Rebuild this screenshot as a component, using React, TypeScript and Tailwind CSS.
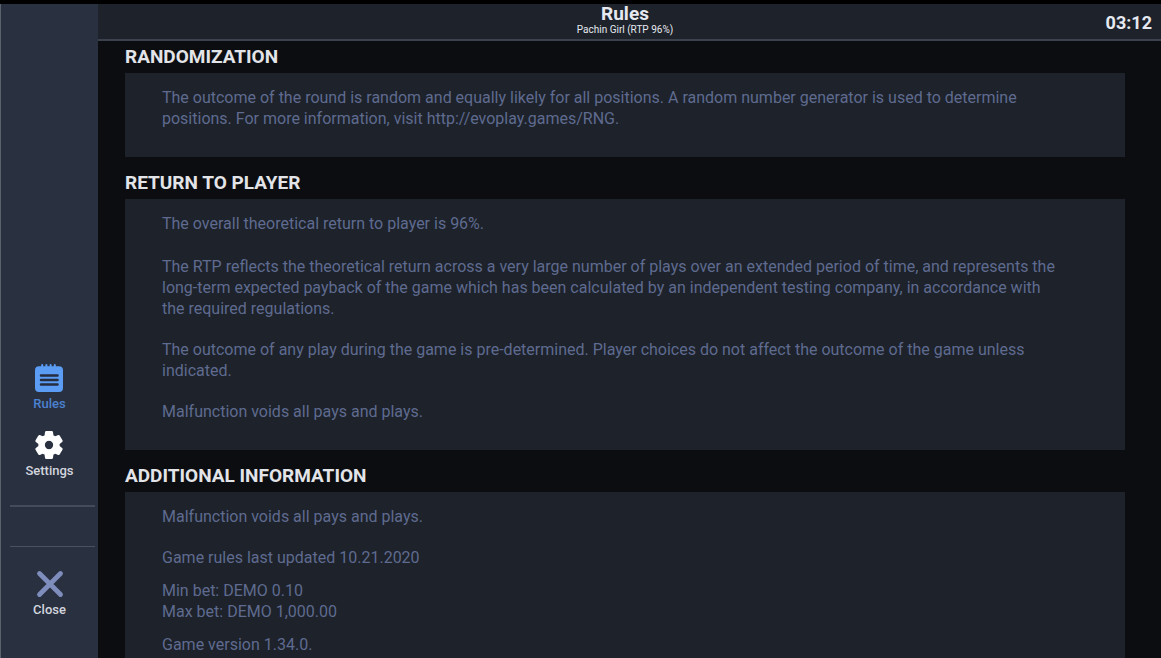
import type { ReactNode } from "react";

function RulesIcon() {
  return (
    <svg viewBox="0 0 28 28" className="h-7 w-7" aria-hidden="true">
      <path
        fill="#5b9df5"
        d="M4 2.200h2.200V1a1 1 0 0 1 2 0v1.200h2.200V1a1 1 0 0 1 2 0v1.200h2.200V1a1 1 0 0 1 2 0v1.200h2.200V1a1 1 0 0 1 2 0v1.200H24a4 4 0 0 1 4 4V24a4 4 0 0 1-4 4H4a4 4 0 0 1-4-4V6.200a4 4 0 0 1 4-4Z"
      />
      <path d="M6 11.500h16.500M6 16h16.500M6 20.500h16.500" stroke="#252d3f" strokeWidth="2.500" strokeLinecap="round" />
    </svg>
  );
}

function GearIcon() {
  return (
    <svg viewBox="1.900 1.900 20.200 20.200" className="h-7 w-7" aria-hidden="true">
      <path
        fill="#ffffff"
        stroke="#ffffff"
        strokeLinejoin="round"
        fillRule="evenodd"
        d="M19.140 12.940c.04-.3.060-.61.060-.94 0-.32-.02-.64-.07-.94l2.030-1.580a.49.49 0 0 0 .12-.61l-1.920-3.320a.49.49 0 0 0-.59-.22l-2.390.96a7 7 0 0 0-1.620-.94l-.36-2.540A.48.48 0 0 0 13.920 2.400h-3.840a.47.47 0 0 0-.47.41l-.36 2.540c-.59.24-1.130.57-1.620.94l-2.390-.96a.47.47 0 0 0-.59.22L2.740 8.870a.47.47 0 0 0 .12.61l2.030 1.580c-.05.3-.09.63-.09.94s.02.64.07.94l-2.030 1.580a.49.49 0 0 0-.12.61l1.920 3.320c.12.22.37.29.59.22l2.390-.96c.5.38 1.030.7 1.620.94l.36 2.540c.05.24.24.41.48.41h3.840c.24 0 .44-.17.47-.41l.36-2.540a7 7 0 0 0 1.620-.94l2.390.96c.22.08.47 0 .59-.22l1.920-3.320a.47.47 0 0 0-.12-.61ZM12 15.500a3.500 3.500 0 1 1 0-7 3.500 3.500 0 0 1 0 7Z"
      />
    </svg>
  );
}

function CloseIcon() {
  return (
    <svg viewBox="0 0 28 28" className="h-7 w-7" aria-hidden="true">
      <path d="M3.500 3.500 24.500 24.500M24.500 3.500 3.500 24.500" stroke="#7f8dbd" strokeWidth="4.800" strokeLinecap="round" />
    </svg>
  );
}

function NavButton({ icon, label, active = false }: { icon: ReactNode; label: string; active?: boolean }) {
  return (
    <button
      type="button"
      aria-current={active ? "page" : undefined}
      className={
        active
          ? "flex flex-col items-center gap-1 text-[13px] leading-4 font-medium text-[#4b82d0]"
          : "flex flex-col items-center gap-1 text-[13px] leading-4 font-medium text-[#d3d6df]"
      }
    >
      {icon}
      <span>{label}</span>
    </button>
  );
}

function Section({ title, children }: { title: string; children: ReactNode }) {
  return (
    <section>
      <h2 className="pb-1 text-[19px] leading-6 font-bold text-[#e3e4e8]">{title}</h2>
      <div className="bg-[#1d222b] pt-3.5 pr-10 pb-7 pl-[37px] text-base leading-[21px] text-[#5f6b8f]">
        {children}
      </div>
    </section>
  );
}

export default function App() {
  return (
    <div className="flex h-screen overflow-hidden border-t-4 border-black bg-[#0b0d11] font-[Roboto,sans-serif]">
      <nav className="flex w-[98px] shrink-0 flex-col border-l border-[#5c626c] bg-[#293040]">
        <div className="mt-auto flex flex-col items-center gap-[19px] pb-[26px]">
          <NavButton icon={<RulesIcon />} label="Rules" active />
          <NavButton icon={<GearIcon />} label="Settings" />
        </div>
        <div className="mr-[3px] ml-[9px] h-[42px] border-t-2 border-b border-t-[#444c5b] border-b-[#4a515f]" />
        <div className="flex flex-col items-center pt-[23px] pb-10">
          <NavButton icon={<CloseIcon />} label="Close" />
        </div>
      </nav>
      <div className="flex min-w-0 flex-1 flex-col">
        <header className="grid shrink-0 grid-cols-[1fr_auto_1fr] items-center border-b-2 border-[#3b414d] bg-[#1d222b] pr-[9px] text-[#e6e9f0]">
          <div className="col-start-2 flex flex-col items-center pb-[3px] text-center">
            <h1 className="text-[19px] leading-5 font-bold">Rules</h1>
            <p className="text-[10px] leading-3">Pachin Girl (RTP 96%)</p>
          </div>
          <time className="justify-self-end pt-0.5 text-lg leading-6 font-bold">03:12</time>
        </header>
        <main className="flex min-h-0 flex-1 flex-col gap-3.5 overflow-hidden pt-1 pr-9 pl-[27px]">
          <Section title="RANDOMIZATION">
            <p>
              The outcome of the round is random and equally likely for all positions. A random number generator is used to determine
              <br />
              positions. For more information, visit http://evoplay.games/RNG.
            </p>
          </Section>
          <Section title="RETURN TO PLAYER">
            <div className="flex flex-col gap-5">
              <p className="pb-0.5">The overall theoretical return to player is 96%.</p>
              <p>
                The RTP reflects the theoretical return across a very large number of plays over an extended period of time, and represents the
                <br />
                long-term expected payback of the game which has been calculated by an independent testing company, in accordance with
                <br />
                the required regulations.
              </p>
              <p>
                The outcome of any play during the game is pre-determined. Player choices do not affect the outcome of the game unless
                <br />
                indicated.
              </p>
              <p>Malfunction voids all pays and plays.</p>
            </div>
          </Section>
          <Section title="ADDITIONAL INFORMATION">
            <div className="flex flex-col gap-3">
              <div className="flex flex-col gap-5">
                <p>Malfunction voids all pays and plays.</p>
                <p>Game rules last updated 10.21.2020</p>
              </div>
              <p>
                Min bet: DEMO 0.10
                <br />
                Max bet: DEMO 1,000.00
              </p>
              <p>Game version 1.34.0.</p>
            </div>
          </Section>
        </main>
      </div>
    </div>
  );
}
